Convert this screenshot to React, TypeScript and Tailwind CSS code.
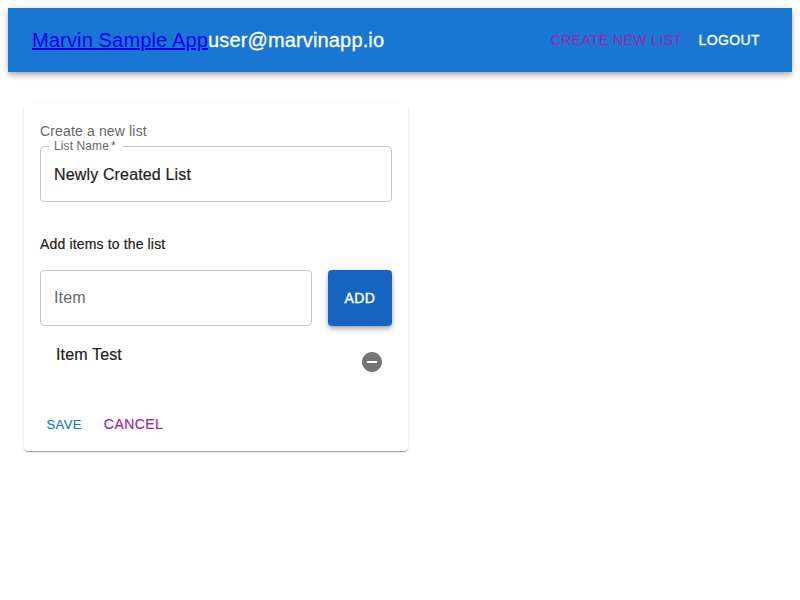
import type { ReactNode } from "react";

const font = "font-['Liberation_Sans',Arial,sans-serif]";

function TextField({ label, children }: { label?: string; children: ReactNode }) {
  return (
    <div className="relative flex h-14 items-center rounded border border-[#c4c4c4] px-[13px] text-base leading-6">
      {label && (
        <span className="absolute -top-[7px] left-2 flex h-3 items-center gap-[2px] bg-white pl-[5px] pr-[7px] text-xs leading-3 tracking-[0.11px] text-[#666666]">
          {label}<span>*</span>
        </span>
      )}
      {children}
    </div>
  );
}

export default function App() {
  return (
    <div className={`${font} min-h-[600px] bg-white p-2 text-[#212121]`}>
      <header className="flex h-16 items-center bg-[#1976d2] px-6 text-white shadow-[0px_2px_4px_-1px_rgba(0,0,0,0.2),0px_4px_5px_0px_rgba(0,0,0,0.14),0px_1px_10px_0px_rgba(0,0,0,0.12)]">
        <div className="grow text-xl font-normal leading-8 tracking-[0.15px] [-webkit-text-stroke:0.3px]">
          <a className="text-[#0000ee] underline [-webkit-text-stroke:0px]">Marvin Sample App</a>user@marvinapp.io
        </div>
        <nav className="flex text-sm leading-6 tracking-[0.4px]">
          <a className="px-2 text-[#9c27b0]">CREATE NEW LIST</a>
          <a className="px-2 [-webkit-text-stroke:0.3px]">LOGOUT</a>
        </nav>
      </header>
      <main className="ml-4 mt-8 flex h-[347px] w-96 flex-col rounded bg-white px-4 pt-4 shadow-[0px_2px_1px_-1px_rgba(0,0,0,0.2),0px_1px_1px_0px_rgba(0,0,0,0.14),0px_1px_3px_0px_rgba(0,0,0,0.12)]">
        <h1 className="mb-[7px] mt-[3px] text-sm leading-4 tracking-[0.15px] text-[#666666]">Create a new list</h1>
        <TextField label="List Name"><span className="pt-[2px] tracking-[0.15px] [-webkit-text-stroke:0.2px]">Newly Created List</span></TextField>
        <h2 className="mt-8 text-sm leading-5 tracking-[0.15px] [-webkit-text-stroke:0.2px]">Add items to the list</h2>
        <div className="mt-4 flex gap-4">
          <div className="grow"><TextField><span className="tracking-[0.15px] text-[#666666]">Item</span></TextField></div>
          <button className="h-14 w-16 rounded bg-[#1565c0] text-sm tracking-[0.4px] text-white shadow-[0px_2px_4px_-1px_rgba(0,0,0,0.2),0px_4px_5px_0px_rgba(0,0,0,0.14),0px_1px_10px_0px_rgba(0,0,0,0.12)] [-webkit-text-stroke:0.4px]">ADD</button>
        </div>
        <div className="flex justify-between pl-4 pr-2 pt-[17px]">
          <span className="leading-6 tracking-[0.15px] [-webkit-text-stroke:0.2px]">Item Test</span>
          <svg className="mt-[7px] h-6 w-6" viewBox="0 0 24 24" fill="#757575"><path d="M12 2C6.48 2 2 6.48 2 12s4.48 10 10 10 10-4.48 10-10S17.52 2 12 2zm5 11H7v-2h10v2z" /></svg>
        </div>
        <div className="mt-[39px] flex items-baseline gap-[22px] pl-[6.5px] leading-6">
          <span className="text-[13px] tracking-[0.4px] text-[#1976d2] [-webkit-text-stroke:0.2px]">SAVE</span>
          <span className="text-sm tracking-[0.45px] text-[#9c27b0] [-webkit-text-stroke:0.2px]">CANCEL</span>
        </div>
      </main>
    </div>
  );
}
